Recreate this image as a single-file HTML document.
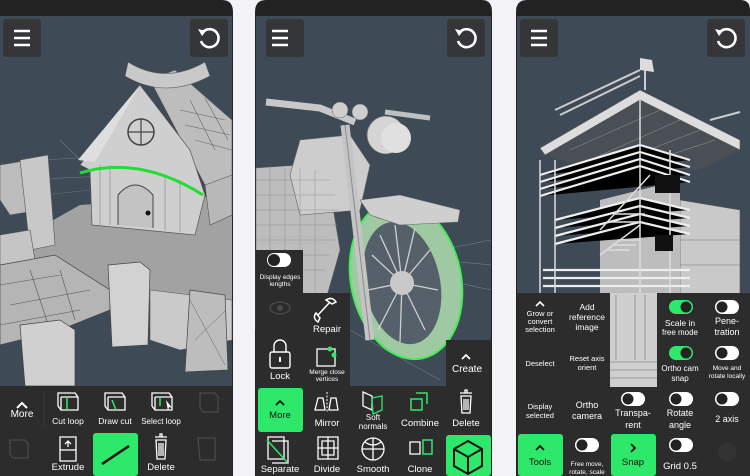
<!DOCTYPE html>
<html><head><meta charset="utf-8"><style>
html,body{margin:0;padding:0;background:#f3f2f7;}
svg{display:block}
text{font-family:"Liberation Sans",sans-serif;fill:#fff;text-anchor:middle}
</style></head><body>
<svg width="750" height="476" viewBox="0 0 750 476" xmlns="http://www.w3.org/2000/svg">
<rect width="750" height="476" fill="#f3f2f7"/>
<!-- ===== PHONE 1 ===== -->
<path d="M0 0H222Q233 0 233 12V476H0Z" fill="#222"/>
<rect x="0" y="16" width="232" height="370" fill="#3e4a56"/>
<g stroke="#6a7886" stroke-width="0.6" fill="none">
<path d="M40 160L232 150M20 180L232 170M0 200L90 190M60 140L120 200"/>
</g>
<polygon points="0,250 80,205 232,195 232,300 170,298 0,330" fill="#a2a2a2"/>
<polygon points="150,80 175,70 232,120 232,180 205,185" fill="#bdbdbd" stroke="#555" stroke-width="0.6"/>
<g stroke="#666" stroke-width="0.6"><path d="M180 110L225 120M185 125L230 135M195 140L232 150M190 100L215 150M205 98L228 140"/></g>
<path d="M128 62Q165 85 205 62L210 76Q165 100 125 76Z" fill="#c9c9c9" stroke="#555" stroke-width="0.6"/>
<polygon points="140,85 190,150 205,195 195,235 92,225 90,170 80,165" fill="#cfcfcf" stroke="#555" stroke-width="0.7"/>
<polygon points="78,160 140,85 95,162" fill="#dedede"/>
<circle cx="141" cy="132" r="13" fill="none" stroke="#444" stroke-width="1.5"/>
<path d="M141 119V145M128 132H154" stroke="#444" stroke-width="1.2"/>
<path d="M118 225V195Q135 175 153 195V228" fill="#c3c3c3" stroke="#444" stroke-width="1"/>
<circle cx="148" cy="213" r="2.5" fill="#111"/>
<g stroke="#777" stroke-width="0.5"><path d="M100 165V225M110 165V225M165 175V230M180 180V232"/></g>
<path d="M80 173Q140 155 203 195" fill="none" stroke="#22dd33" stroke-width="3"/>
<polygon points="205,185 232,175 232,215 210,225" fill="#b8b8b8" stroke="#555" stroke-width="0.6"/>
<polygon points="0,165 30,160 45,175 40,210 10,215 0,200" fill="#bcbcbc" stroke="#555" stroke-width="0.6"/>
<polygon points="20,160 48,155 55,245 30,250" fill="#c8c8c8" stroke="#555" stroke-width="0.6"/>
<polygon points="0,235 30,230 35,260 0,265" fill="#c5c5c5" stroke="#555" stroke-width="0.6"/>
<polygon points="0,265 55,255 110,290 110,310 60,330 0,345" fill="#b5b5b5" stroke="#444" stroke-width="0.7"/>
<g stroke="#555" stroke-width="0.6"><path d="M0 285L60 275M10 305L90 290M0 325L80 310M30 270L50 330M60 270L75 320"/></g>
<polygon points="20,325 60,320 75,330 75,386 25,386" fill="#d0d0d0" stroke="#444" stroke-width="0.7"/>
<polygon points="108,265 140,262 150,270 148,345 112,347" fill="#d2d2d2" stroke="#444" stroke-width="0.7"/>
<polygon points="150,290 232,300 232,340 180,350 150,340" fill="#cacaca" stroke="#555" stroke-width="0.6"/>
<polygon points="190,290 225,295 228,370 185,372" fill="#bdbdbd" stroke="#444" stroke-width="0.7"/>
<path d="M190 300L225 365M195 340L226 310" stroke="#666" stroke-width="0.5"/>
<rect x="3" y="19" width="38" height="38" rx="3" fill="#343638"/>
<path d="M14 31H30M14 38H30M14 45H30" stroke="#fff" stroke-width="2.6"/>
<rect x="190" y="19" width="38" height="38" rx="3" fill="#343638"/>
<path d="M203 32A9 9 0 1 1 201 41" fill="none" stroke="#fff" stroke-width="2.6"/><path d="M198 29L206 31L202 36Z" fill="#fff"/>
<rect x="0" y="386" width="232" height="90" fill="#2c2c2c"/>
<path d="M17 408L22 403L27 408" fill="none" stroke="#fff" stroke-width="2"/>
<text x="22" y="417" font-size="10">More</text>
<path d="M44 392V428" stroke="#3a3a3a"/>
<g fill="none" stroke="#fff" stroke-width="1.3">
<path d="M58 393H75L78 397V410H61L58 406Z M61 397H78M61 397V410"/>
<path d="M105 393H122L125 397V410H108L105 406Z M108 397H125M108 397V410"/>
<path d="M152 393H169L172 397V410H155L152 406Z M155 397H172M155 397V410"/>
<path d="M62 437H76V461H60V437Z M60 450H76M68 447V441M65 444L68 441L71 444"/>
<path d="M155 437H167M160 437V434H162V437M156 440H166L165 459H157Z M159 443V456M161 443V456M163 443V456"/>
</g>
<g stroke="#2ee86a" stroke-width="1.5"><path d="M67 397V410M112 400L116 410M160 397V406"/></g>
<path d="M166 400L172 408L169 407L168 411Z" fill="#fff"/>
<g fill="none" stroke="#4a4a4a" stroke-width="1.3"><path d="M200 393H215L218 397V412H203L200 408Z"/><path d="M10 440H25L28 444V458H13L10 454Z"/><path d="M198 438H215V460H200Z"/></g>
<text x="68" y="424" font-size="8.5">Cut loop</text>
<text x="115" y="424" font-size="8.5">Draw cut</text>
<text x="161" y="424" font-size="8">Select loop</text>
<text x="68" y="470" font-size="9.5">Extrude</text>
<rect x="93" y="433" width="45" height="43" rx="3" fill="#2ee86a"/>
<path d="M102 464L129 446" stroke="#111" stroke-width="2.5"/>
<text x="161" y="470" font-size="9.5">Delete</text>

<!-- ===== PHONE 2 ===== -->
<path d="M266 0H482Q492 0 492 12V476H255V12Q255 0 266 0Z" fill="#222"/>
<rect x="256" y="16" width="235" height="370" fill="#3e4a56"/>
<g stroke="#7a8896" stroke-width="0.5"><path d="M440 250L491 240M440 260L491 265M445 280L491 290M350 330L440 380"/></g>
<polygon points="256,168 300,165 330,190 340,250 320,320 256,330" fill="#bdbdbd" stroke="#666" stroke-width="0.5"/>
<polygon points="300,140 350,135 370,165 360,210 300,215 290,175" fill="#cdcdcd" stroke="#666" stroke-width="0.6"/>
<g stroke="#888" stroke-width="0.4"><path d="M256 180H330M256 195H335M256 210H338M256 225H338M256 240H335M256 255H330M256 270H325M270 168V320M285 168V320M300 168V320M315 170V320"/></g>
<path d="M266 102L320 108L355 122" fill="none" stroke="#c8c8c8" stroke-width="7"/>
<path d="M385 112L430 118" stroke="#c0c0c0" stroke-width="5"/>
<circle cx="340" cy="110" r="8" fill="#cfcfcf" stroke="#666" stroke-width="0.5"/>
<circle cx="360" cy="112" r="8" fill="#cfcfcf" stroke="#666" stroke-width="0.5"/>
<circle cx="386" cy="135" r="19" fill="#d5d5d5" stroke="#666" stroke-width="0.8"/>
<circle cx="396" cy="138" r="15" fill="#e0e0e0"/>
<ellipse cx="406" cy="280" rx="55" ry="80" transform="rotate(-12 406 280)" fill="#9fc9a3" stroke="#44ee55" stroke-width="2"/>
<ellipse cx="402" cy="283" rx="38" ry="62" transform="rotate(-12 402 283)" fill="#55606a"/>
<g stroke="#d0d0d0" stroke-width="1.3"><path d="M402 283L380 235M402 283L395 225M402 283L415 228M402 283L430 250M402 283L438 290M402 283L425 330M402 283L400 342M402 283L378 330M402 283L368 290M402 283L372 255"/></g>
<circle cx="402" cy="283" r="12" fill="#c9c9c9"/>
<polygon points="360,200 400,195 460,210 458,222 400,225 370,215" fill="#cfcfcf" stroke="#666" stroke-width="0.6"/>
<path d="M345 125L370 340" stroke="#c4c4c4" stroke-width="9"/>
<path d="M345 125L370 340" stroke="#8a8a8a" stroke-width="1"/>
<rect x="256" y="250" width="47" height="136" fill="#2c2c2c"/>
<rect x="303" y="293" width="47" height="93" fill="#2c2c2c"/>
<rect x="446" y="340" width="45" height="46" fill="#2c2c2c"/>
<rect x="267" y="253" width="24" height="14" rx="7" fill="#fff"/><circle cx="274" cy="260" r="6" fill="#222"/>
<text x="280" y="279" font-size="6.5">Display edges</text><text x="280" y="286" font-size="6.5">lengths</text>
<ellipse cx="280" cy="308" rx="10" ry="6" fill="none" stroke="#4a4a4a" stroke-width="1.3"/><circle cx="280" cy="308" r="3" fill="#4a4a4a"/>
<path d="M318 315L330 302M326 300Q332 296 336 302L332 304ZM316 313Q312 318 318 322L320 318Z" fill="none" stroke="#fff" stroke-width="1.5"/>
<text x="327" y="332" font-size="9.5">Repair</text>
<rect x="270" y="352" width="20" height="16" rx="2" fill="none" stroke="#fff" stroke-width="1.4"/><path d="M274 352V346A6 6 0 0 1 286 346V352" fill="none" stroke="#fff" stroke-width="1.4"/><rect x="279" y="357" width="2" height="5" fill="#fff"/>
<text x="280" y="379" font-size="9.5">Lock</text>
<rect x="317" y="349" width="18" height="17" fill="none" stroke="#fff" stroke-width="1.3"/>
<circle cx="330" cy="349" r="2.5" fill="#2ee86a"/><circle cx="334" cy="355" r="2.5" fill="#2ee86a"/>
<text x="327" y="374" font-size="6.5">Merge close</text><text x="327" y="381" font-size="6.5">vertices</text>
<path d="M462 359L466 355L470 359" fill="none" stroke="#fff" stroke-width="1.8"/>
<text x="467" y="372" font-size="10">Create</text>
<rect x="256" y="386" width="235" height="90" fill="#2c2c2c"/>
<rect x="258" y="388" width="45" height="44" rx="3" fill="#2ee86a"/>
<path d="M276 405L280 401L284 405" fill="none" stroke="#111" stroke-width="1.8"/>
<text x="280" y="418" font-size="9.5" style="fill:#111">More</text>
<g fill="none" stroke="#fff" stroke-width="1.3">
<path d="M318 398H323L325 410H315Z M331 398H336L338 410H329Z"/>
<path d="M363 392L372 396V410L363 406Z"/>
<path d="M460 393H472M465 393V390H467V393M461 396H471L470 413H462Z M464 399V410M466 399V410M468 399V410"/>
<path d="M268 437H284V459H268Z M272 441H288V463H272"/>
<path d="M318 437H338V459H318Z M322 441H334V455H322Z M328 437V459M318 448H338"/>
<circle cx="373" cy="449" r="11"/><path d="M362 449H384M373 438V460M365 442Q373 448 381 442"/>
<path d="M410 442H420V454H410Z"/>
</g>
<path d="M327 392V412" stroke="#fff" stroke-width="1" stroke-dasharray="2 1.5"/>
<path d="M372 398L382 396V410L373 414Z" fill="none" stroke="#2ee86a" stroke-width="1.3"/>
<g fill="none" stroke="#2ee86a" stroke-width="1.5"><path d="M411 399H422V410H411Z M416 393H427V404"/><path d="M267 440L287 462"/><path d="M423 440H432V454H423Z"/></g>
<text x="327" y="426" font-size="9.5">Mirror</text>
<text x="373" y="420" font-size="8">Soft</text><text x="373" y="429" font-size="8">normals</text>
<text x="420" y="426" font-size="9.5">Combine</text>
<text x="466" y="426" font-size="9.5">Delete</text>
<text x="280" y="472" font-size="9.5">Separate</text>
<text x="327" y="472" font-size="9.5">Divide</text>
<text x="373" y="472" font-size="9.5">Smooth</text>
<text x="420" y="472" font-size="9.5">Clone</text>
<rect x="446" y="435" width="45" height="41" rx="3" fill="#2ee86a"/>
<path d="M468 441L482 449V466L468 474L454 466V449Z M454 449L468 457L482 449M468 457V474" fill="none" stroke="#111" stroke-width="2"/>

<!-- ===== PHONE 3 ===== -->
<path d="M527 0H740Q750 0 750 10V476H516V12Q516 0 527 0Z" fill="#222"/>
<rect x="517" y="16" width="233" height="370" fill="#3e4a56"/>
<path d="M555 110L640 70M560 115L640 76M645 60V90M710 120L740 112" stroke="#ccc" stroke-width="2"/>
<polygon points="640,58 652,60 654,72 640,70" fill="#ddd"/>
<polygon points="540,148 640,90 740,140 740,150 640,100 545,155" fill="#ddd" stroke="#555" stroke-width="0.6"/>
<polygon points="545,155 640,100 740,150 700,170 600,170 560,160" fill="#4a4f55"/>
<g stroke="#999" stroke-width="0.5"><path d="M570 150L660 110M590 160L680 120M610 165L700 130M630 168L715 140"/></g>
<polygon points="680,200 740,210 740,300 680,300" fill="#c9c9c9" stroke="#555" stroke-width="0.6"/>
<path d="M680 240H740M680 265H740" stroke="#777" stroke-width="0.6"/>
<polygon points="600,200 680,180 680,300 600,300" fill="#bdbdbd"/>
<g stroke="#eee" stroke-width="2.2">
<path d="M540 175L640 145L690 160M540 182L640 152L690 167M540 189L640 159L690 175M540 196L640 166L690 182"/>
<path d="M555 220L640 198L690 210M555 228L640 206L690 218M555 236L640 214L690 226M555 244L640 222L690 234"/>
<path d="M543 270H690M543 278H690M543 286H690"/>
</g>
<path d="M540 160V300M555 160V300M640 100V300M670 150V300" stroke="#ddd" stroke-width="1.5"/>
<g stroke="#ddd" stroke-width="1.5"><path d="M600 255L640 225M606 250L630 250M612 245L636 245M618 240L640 240"/><path d="M600 230L650 175M608 222L640 222M614 214L645 214"/></g>
<rect x="655" y="175" width="25" height="18" fill="#111"/>
<rect x="655" y="235" width="18" height="16" fill="#111"/>
<rect x="520" y="19" width="38" height="38" rx="3" fill="#343638"/>
<path d="M531 31H547M531 38H547M531 45H547" stroke="#fff" stroke-width="2.6"/>
<rect x="707" y="19" width="38" height="38" rx="3" fill="#343638"/>
<path d="M720 32A9 9 0 1 1 718 41" fill="none" stroke="#fff" stroke-width="2.6"/><path d="M715 29L723 31L719 36Z" fill="#fff"/>
<rect x="266" y="19" width="38" height="38" rx="3" fill="#343638"/>
<path d="M272 31H288M272 38H288M272 45H288" stroke="#fff" stroke-width="2.6"/>
<rect x="447" y="19" width="38" height="38" rx="3" fill="#343638"/>
<path d="M460 32A9 9 0 1 1 458 41" fill="none" stroke="#fff" stroke-width="2.6"/><path d="M455 29L463 31L459 36Z" fill="#fff"/>
<path d="M517 293H610V387H657V293H750V476H517Z" fill="#2c2c2c"/>
<rect x="610" y="293" width="47" height="94" fill="#cfcfcf"/>
<g stroke="#888" stroke-width="0.8"><path d="M616 295V360M635 295V360M645 295V360M610 362H657M610 370H657M610 378H657"/></g>
<g font-size="7.5">
<path d="M536 306L540 302L544 306" fill="none" stroke="#fff" stroke-width="1.6"/>
<text x="540" y="316">Grow or</text><text x="540" y="324">convert</text><text x="540" y="332">selection</text>
<text x="587" y="310" font-size="8.5">Add</text><text x="587" y="320" font-size="8.5">reference</text><text x="587" y="330" font-size="8.5">image</text>
<text x="540" y="366">Deselect</text>
<text x="587" y="361">Reset axis</text><text x="587" y="370">orient</text>
<text x="540" y="409">Display</text><text x="540" y="418">selected</text>
<text x="587" y="408" font-size="9">Ortho</text><text x="587" y="419" font-size="9">camera</text>
<text x="680" y="326" font-size="8.5">Scale in</text><text x="680" y="335" font-size="8">free mode</text>
<text x="727" y="324" font-size="9">Pene-</text><text x="727" y="335" font-size="9">tration</text>
<text x="680" y="371" font-size="8">Ortho cam</text><text x="680" y="381" font-size="8">snap</text>
<text x="727" y="370" font-size="6.5">Move and</text><text x="727" y="378" font-size="6.5">rotate locally</text>
<text x="633" y="416" font-size="9">Transpa-</text><text x="633" y="428" font-size="9">rent</text>
<text x="680" y="416" font-size="9">Rotate</text><text x="680" y="428" font-size="9">angle</text>
<text x="727" y="422" font-size="9">2 axis</text>
<text x="587" y="466" font-size="6.5">Free move,</text><text x="587" y="474" font-size="6.5">rotate, scale</text>
<text x="680" y="469" font-size="9.5">Grid 0.5</text>
</g>
<rect x="669" y="300" width="24" height="14" rx="7" fill="#2ee86a"/><circle cx="686" cy="307" r="5.5" fill="#222"/>
<rect x="715" y="300" width="24" height="14" rx="7" fill="#fff"/><circle cx="722" cy="307" r="5.5" fill="#222"/>
<rect x="669" y="346" width="24" height="14" rx="7" fill="#2ee86a"/><circle cx="686" cy="353" r="5.5" fill="#222"/>
<rect x="715" y="346" width="24" height="14" rx="7" fill="#fff"/><circle cx="722" cy="353" r="5.5" fill="#222"/>
<rect x="621" y="392" width="24" height="14" rx="7" fill="#fff"/><circle cx="628" cy="399" r="5.5" fill="#222"/>
<rect x="669" y="392" width="24" height="14" rx="7" fill="#fff"/><circle cx="676" cy="399" r="5.5" fill="#222"/>
<rect x="715" y="392" width="24" height="14" rx="7" fill="#fff"/><circle cx="722" cy="399" r="5.5" fill="#222"/>
<rect x="575" y="438" width="24" height="14" rx="7" fill="#fff"/><circle cx="582" cy="445" r="5.5" fill="#222"/>
<rect x="669" y="438" width="24" height="14" rx="7" fill="#fff"/><circle cx="676" cy="445" r="5.5" fill="#222"/>
<rect x="518" y="434" width="45" height="42" rx="3" fill="#2ee86a"/>
<path d="M536 450L540 446L544 450" fill="none" stroke="#111" stroke-width="1.8"/>
<text x="540" y="465" font-size="9.5" style="fill:#111">Tools</text>
<rect x="611" y="434" width="45" height="42" rx="3" fill="#2ee86a"/>
<path d="M631 444L635 448L631 452" fill="none" stroke="#111" stroke-width="1.8"/>
<text x="633" y="465" font-size="9.5" style="fill:#111">Snap</text>
<circle cx="727" cy="452" r="9" fill="#333"/>
</svg>
</body></html>
